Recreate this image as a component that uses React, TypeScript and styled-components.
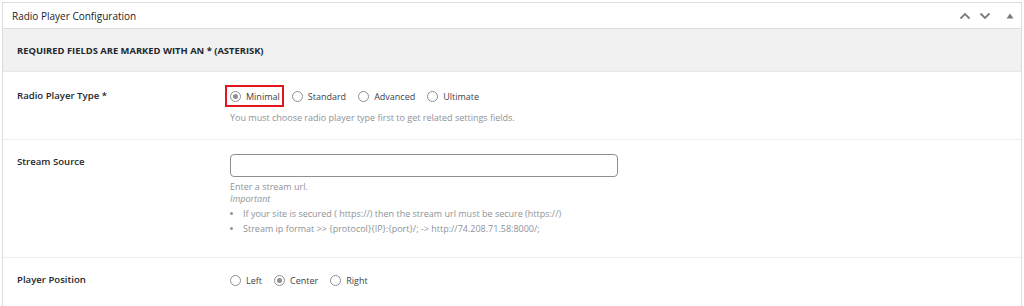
import React from "react";
import styled, { createGlobalStyle } from "styled-components";

const Global = createGlobalStyle`
  html, body { margin: 0; padding: 0; background: #fff; }
  body { font-family: "Open Sans", "Noto Sans", sans-serif; color: #23282d; }
  * { box-sizing: border-box; }
`;

const Page = styled.div`
  padding: 2px 2px 0 2px;
  width: 1024px;
  height: 306px;
  overflow: hidden;
`;

const Box = styled.div`
  border: 1px solid #dcdcde;
  border-bottom: none;
  background: #fff;
  height: 310px;
`;

const Header = styled.div`
  display: flex;
  align-items: center;
  justify-content: space-between;
  height: 26px;
  padding: 0 7px 0 9px;
  border-bottom: 1px solid #dcdcde;
`;

const Title = styled.h2`
  margin: 0;
  font-size: 10px;
  font-weight: 500;
  color: #1d2327;
`;

const Controls = styled.div`
  display: flex;
  align-items: center;
  gap: 8px;
`;

const Notice = styled.div`
  background: #f1f1f1;
  height: 43px;
  display: flex;
  align-items: center;
  padding-left: 14px;
  font-size: 9.4px;
  font-weight: 700;
  color: #23282d;
  border-bottom: 1px solid #e8e8e8;
`;

const Row = styled.div<{ $h: number }>`
  display: grid;
  grid-template-columns: 213px 1fr;
  height: ${(p) => p.$h}px;
  border-bottom: 1px solid #eeeeee;
  padding-left: 14px;
`;

const Label = styled.div<{ $top: number }>`
  padding-top: ${(p) => p.$top}px;
  font-size: 9.6px;
  line-height: 13px;
  font-weight: 600;
  color: #23282d;
`;

const Field = styled.div<{ $top: number }>`
  padding-top: ${(p) => p.$top}px;
`;

const RadioGroup = styled.div`
  display: flex;
  align-items: center;
  gap: 12px;
`;

const Option = styled.label<{ $boxed?: boolean }>`
  display: inline-flex;
  align-items: center;
  gap: 5px;
  height: 22px;
  color: #3c434a;
  font-size: 9px;
  ${(p) =>
    p.$boxed
      ? `border: 2px solid #e3161d; padding: 0 2px 0 3px; margin: 0 -4px 0 -5px;`
      : ``}
`;

const Dot = styled.span<{ $on?: boolean }>`
  width: 11px;
  height: 11px;
  border-radius: 50%;
  border: 1px solid #8c8f94;
  display: inline-flex;
  align-items: center;
  justify-content: center;
  flex: none;
  &::after {
    content: "";
    width: 5px;
    height: 5px;
    border-radius: 50%;
    background: ${(p) => (p.$on ? "#8c8f94" : "transparent")};
  }
`;

const Desc = styled.p<{ $mt?: number }>`
  margin: ${(p) => p.$mt ?? 0}px 0 0 0;
  color: #8e9399;
  font-size: 9px;
  line-height: 12px;
`;

const Em = styled.p`
  margin: 0;
  color: #8e9399;
  font-size: 9px;
  font-style: italic;
  line-height: 12px;
`;

const List = styled.ul`
  margin: 3px 0 0 0;
  padding: 0 0 0 13px;
  color: #8e9399;
  font-size: 9px;
  line-height: 12px;
  li { margin-bottom: 3px; }
  li::marker { font-size: 8px; }
`;

const Input = styled.input`
  width: 388px;
  height: 23px;
  border: 1px solid #8c8f94;
  border-radius: 4px;
  background: #fff;
  display: block;
`;

const Chevron = ({ up }: { up?: boolean }) => (
  <svg width="12" height="8" viewBox="0 0 12 8">
    <path
      d={up ? "M1.5 6.5 L6 2 L10.5 6.5" : "M1.5 1.5 L6 6 L10.5 1.5"}
      fill="none"
      stroke="#787c82"
      strokeWidth="1.8"
    />
  </svg>
);

const Tri = () => (
  <svg width="8" height="6" viewBox="0 0 8 6" style={{ marginLeft: 7 }}>
    <path d="M4 0.5 L7.5 5.5 L0.5 5.5 Z" fill="#787c82" />
  </svg>
);

export default function App() {
  return (
    <>
      <Global />
      <Page>
        <Box>
          <Header>
            <Title>Radio Player Configuration</Title>
            <Controls>
              <Chevron up />
              <Chevron />
              <Tri />
            </Controls>
          </Header>
          <Notice>REQUIRED FIELDS ARE MARKED WITH AN * (ASTERISK)</Notice>
          <Row $h={68}>
            <Label $top={17}>Radio Player Type *</Label>
            <Field $top={13}>
              <RadioGroup>
                <Option $boxed>
                  <Dot $on /> Minimal
                </Option>
                <Option>
                  <Dot /> Standard
                </Option>
                <Option>
                  <Dot /> Advanced
                </Option>
                <Option>
                  <Dot /> Ultimate
                </Option>
              </RadioGroup>
              <Desc $mt={5}>You must choose radio player type first to get related settings fields.</Desc>
            </Field>
          </Row>
          <Row $h={118}>
            <Label $top={15}>Stream Source</Label>
            <Field $top={14}>
              <Input type="text" />
              <Desc $mt={4}>Enter a stream url.</Desc>
              <Em>Important</Em>
              <List>
                <li>If your site is secured ( https://) then the stream url must be secure (https://)</li>
                <li>Stream ip format &gt;&gt; {"{protocol}{IP}:{port}/;"} -&gt; http://74.208.71.58:8000/;</li>
              </List>
            </Field>
          </Row>
          <Row $h={60}>
            <Label $top={15}>Player Position</Label>
            <Field $top={11}>
              <RadioGroup>
                <Option>
                  <Dot /> Left
                </Option>
                <Option>
                  <Dot $on /> Center
                </Option>
                <Option>
                  <Dot /> Right
                </Option>
              </RadioGroup>
            </Field>
          </Row>
        </Box>
      </Page>
    </>
  );
}
